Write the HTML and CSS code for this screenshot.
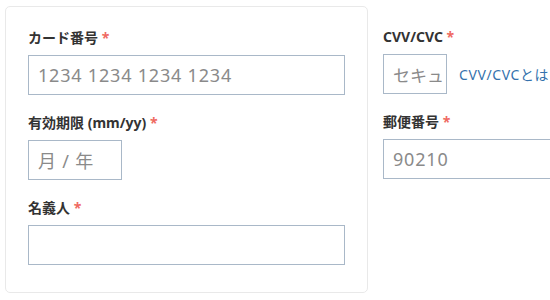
FILE: index.html
```html
<!DOCTYPE html>
<html lang="ja">
<head>
<meta charset="utf-8">
<link rel="stylesheet" href="styles.css">
</head>
<body>
<div class="page">
  <div class="card">
    <div class="field">
      <label class="label">カード番号 <span class="req">*</span></label>
      <div class="input wide"><span class="ph">1234 1234 1234 1234</span></div>
    </div>
    <div class="field">
      <label class="label">有効期限 (mm/yy) <span class="req">*</span></label>
      <div class="input expiry"><span class="ph">月 / 年</span></div>
    </div>
    <div class="field">
      <label class="label">名義人 <span class="req">*</span></label>
      <div class="input wide"></div>
    </div>
  </div>
  <div class="side">
    <div class="field">
      <label class="label">CVV/CVC <span class="req">*</span></label>
      <div class="cvv-row">
        <div class="input cvv"><span class="ph">セキュ</span></div>
        <a class="help">CVV/CVCとは</a>
      </div>
    </div>
    <div class="field">
      <label class="label">郵便番号 <span class="req">*</span></label>
      <div class="input postal"><span class="ph">90210</span></div>
    </div>
  </div>
</div>
</body>
</html>
```
FILE: styles.css
```css
html, body {
  margin: 0;
  padding: 0;
  background: #fff;
  overflow: hidden;
}
body {
  width: 550px;
  height: 300px;
  font-family: "Noto Sans", "Noto Sans CJK JP", sans-serif;
  color: #333;
}
.page {
  display: flex;
  align-items: flex-start;
  padding-left: 5px;
  width: 545px;
  overflow: hidden;
}
.card {
  flex: none;
  margin-top: 6px;
  width: 363px;
  border: 1px solid #e9e9e9;
  border-radius: 5px;
  padding: 21px 0 27px 22px;
  box-sizing: border-box;
  height: 287px;
}
.side {
  flex: none;
  margin-top: 5px;
  margin-left: 15px;
  padding-top: 22px;
  width: 167px;
}
.field + .field {
  margin-top: 18px;
}
.label {
  display: block;
  font-family: "Noto Sans", "Noto Sans CJK JP", sans-serif;
  font-weight: 700;
  font-size: 14px;
  line-height: 20px;
  height: 20px;
  margin-bottom: 7px;
  color: #333;
  white-space: nowrap;
}
.req {
  color: #ef6a62;
  font-weight: 700;
}
.input {
  box-sizing: border-box;
  height: 40px;
  border: 1px solid #a9b8c8;
  background: #fff;
  padding: 0 9px;
  display: flex;
  align-items: center;
  overflow: hidden;
  white-space: nowrap;
}
.ph {
  font-family: "Noto Sans", "Noto Sans CJK JP", sans-serif;
  font-size: 18px;
  letter-spacing: 0.8px;
  color: #8a8a8a;
}
.wide {
  width: 317px;
}
.postal {
  width: 180px;
}
.expiry {
  width: 94px;
}
.cvv {
  flex: none;
  width: 64px;
}
.cvv .ph {
  letter-spacing: 0;
  font-size: 17px;
}
.cvv-row {
  display: flex;
  align-items: center;
}
.help {
  margin-left: 12px;
  font-size: 14px;
  letter-spacing: 0.6px;
  color: #3572ad;
  white-space: nowrap;
}
```
